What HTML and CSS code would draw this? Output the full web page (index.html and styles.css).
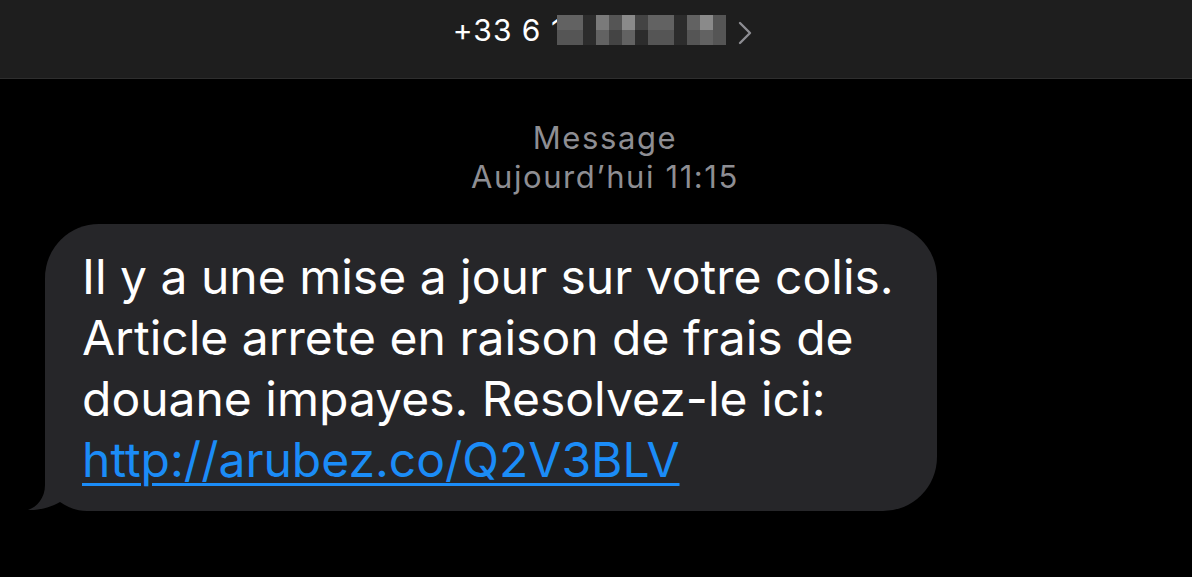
FILE: index.html
```html
<!DOCTYPE html>
<html lang="fr">
<head>
    <meta charset="UTF-8">
    <meta name="viewport" content="width=device-width, initial-scale=1.0">
    <title>Messages</title>
    <link rel="stylesheet" href="styles.css">
</head>
<body>
    <!-- Barre du haut avec le numéro masqué -->
    <div class="topbar">
        <span class="contact">+33 6 1</span>
        <div class="mosaic">
            <i class="g3"></i><i class="g3"></i><i class="g0"></i><i class="g4"></i><i class="g2"></i><i class="g5"></i><i class="g1"></i><i class="g3"></i><i class="g3"></i><i class="g0"></i><i class="g3"></i><i class="g5"></i><i class="g2"></i>
            <i class="g2"></i><i class="g2"></i><i class="g0"></i><i class="g3"></i><i class="g1"></i><i class="g3"></i><i class="g0"></i><i class="g2"></i><i class="g2"></i><i class="g0"></i><i class="g2"></i><i class="g3"></i><i class="g2"></i>
        </div>
        <svg class="chevron" width="14" height="24" viewBox="0 0 14 24">
            <path d="M2 2 L12 12 L2 22" fill="none" stroke="#8d8d92" stroke-width="2.4" stroke-linecap="round" stroke-linejoin="round"/>
        </svg>
    </div>

    <!-- Date du message -->
    <div class="stamp">
        <p>Message</p>
        <p>Aujourd’hui 11:15</p>
    </div>

    <!-- Bulle reçue -->
    <div class="thread">
        <div class="bubble">
            <svg class="tail" width="75" height="56" viewBox="0 0 75 56">
                <path d="M20 0 L20 30 C20 43 12 52 3 55 C14 55.5 27 52 35 47 C44 53 52 56 62 56 L75 56 L75 0 Z" fill="#262629"/>
            </svg>
            <p>Il y a une mise a jour sur votre colis.<br>
            Article arrete en raison de frais de<br>
            douane impayes. Resolvez-le ici:<br>
            <a href="#">http://arubez.co/Q2V3BLV</a></p>
        </div>
    </div>
</body>
</html>
```

FILE: styles.css
```css
* {
    margin: 0;
    padding: 0;
    box-sizing: border-box;
}

body {
    font-family: 'Inter', 'Liberation Sans', sans-serif;
    background-color: #000;
    color: #fff;
    width: 1192px;
    height: 577px;
    overflow: hidden;
}

/* Barre du haut */
.topbar {
    height: 79px;
    background-color: #1e1e1e;
    border-bottom: 1px solid #2e2e2e;
    display: flex;
    justify-content: center;
    align-items: flex-start;
    padding-top: 13px;
    padding-left: 13px;
}

.contact {
    font-size: 30px;
    line-height: 34px;
    letter-spacing: 1px;
    color: #fff;
    white-space: pre;
}

.mosaic {
    display: grid;
    grid-template-columns: repeat(13, 13px);
    grid-template-rows: 15px 15px;
    margin-top: 2px;
    margin-left: -7px;
}

.mosaic i {
    display: block;
}

.g0 { background-color: #2c2c2c; }
.g1 { background-color: #444; }
.g2 { background-color: #555; }
.g3 { background-color: #626262; }
.g4 { background-color: #7a7a7a; }
.g5 { background-color: #8a8a8a; }

.chevron {
    margin-top: 8px;
    margin-left: 12px;
}

/* Date */
.stamp {
    margin-top: 39px;
    padding-left: 18px;
    text-align: center;
    color: #8e8e93;
    font-size: 31px;
    line-height: 39px;
    letter-spacing: 1.6px;
}

/* Fil de messages */
.thread {
    padding: 28px 0 0 45px;
}

.bubble {
    position: relative;
    width: 892px;
    background-color: #262629;
    border-radius: 54px;
    padding: 22px 37px 21px;
}

.bubble p {
    position: relative;
    font-size: 48px;
    line-height: 61px;
    white-space: nowrap;
}

.bubble a {
    color: #1b8cf7;
    text-decoration: underline;
    text-decoration-thickness: 3px;
    text-underline-offset: 6px;
}

.tail {
    position: absolute;
    left: -20px;
    bottom: 0;
}
```
